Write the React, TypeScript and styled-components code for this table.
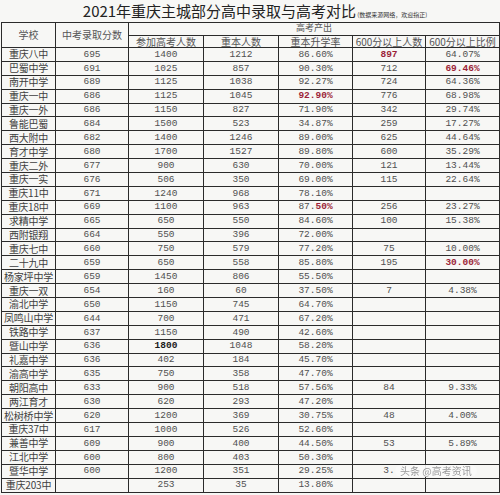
import styled, { createGlobalStyle } from "styled-components";

const GlobalStyle = createGlobalStyle`
  html, body {
    margin: 0;
    padding: 0;
    background: #f7f7f5;
  }
`;

const Page = styled.div`
  width: 500px;
  height: 495px;
  overflow: hidden;
  background: #f7f7f5;
  color: #4a4a4a;
`;

const TitleBar = styled.div`
  height: 22px;
  display: flex;
  justify-content: center;
  align-items: flex-end;
  padding-left: 10px;
  box-sizing: border-box;
`;

const Title = styled.h1`
  margin: 0 0 2px;
  font-family: "Noto Sans CJK SC", sans-serif;
  font-size: 15px;
  font-weight: 400;
  line-height: 18px;
  color: #222;
`;

const Source = styled.span`
  margin: 0 0 4px 1px;
  font-family: "Noto Sans CJK SC", sans-serif;
  font-size: 6px;
  line-height: 7px;
  color: #333;
`;

const Table = styled.table`
  margin-left: 1px;
  width: 498px;
  border-collapse: collapse;
  table-layout: fixed;
`;

const HeadRow = styled.tr<{ $h: number }>`
  height: ${(p) => p.$h}px;
`;

const HeadCell = styled.th<{ $small?: boolean }>`
  padding: 0;
  border: 1px solid #2b2b2b;
  font-family: "Noto Sans CJK SC", sans-serif;
  font-size: ${(p) => (p.$small ? 9 : 10)}px;
  font-weight: 400;
  line-height: 1;
  color: #555;
  text-align: center;
  white-space: nowrap;
  vertical-align: ${(p) => (p.$small ? "top" : "middle")};
`;

const Row = styled.tr`
  height: 13.9px;
`;

const NameCell = styled.td`
  padding: 0;
  border: 1px solid #2b2b2b;
  font-family: "Noto Sans CJK SC", sans-serif;
  font-size: 10px;
  line-height: 1;
  color: #3f3f3f;
  text-align: center;
  white-space: nowrap;
  overflow: hidden;
  letter-spacing: -0.2px;
`;

const Cell = styled.td<{ $tone?: "red" | "bold" }>`
  position: relative;
  padding: 0;
  border: 1px solid #2b2b2b;
  font-family: "Liberation Mono", "Noto Sans CJK SC", monospace;
  font-size: 9.5px;
  line-height: 1;
  text-align: center;
  white-space: nowrap;
  color: ${(p) => (p.$tone === "red" ? "#9c1f38" : p.$tone === "bold" ? "#1a1a1a" : "#505050")};
  font-weight: ${(p) => (p.$tone ? 700 : 400)};
`;

const RedPart = styled.span`
  color: #9c1f38;
  font-weight: 700;
`;

const Watermark = styled.span`
  position: absolute;
  left: 42px;
  top: 0;
  padding: 0 5px;
  border-radius: 7px;
  background: rgba(250, 250, 250, 0.9);
  font-family: "Noto Sans CJK SC", sans-serif;
  font-size: 10px;
  line-height: 12px;
  font-weight: 400;
  color: #9a9a9a;
  filter: blur(0.4px);
  white-space: nowrap;
`;

type Tone = "red" | "bold" | undefined;
type School = {
  name: string;
  score: string;
  exam: string;
  top: string;
  rate: string;
  over: string;
  ratio: string;
  tones?: Partial<Record<"exam" | "rate" | "over" | "ratio", Tone>>;
};

const rows: School[] = [
  { name: "重庆八中", score: "695", exam: "1400", top: "1212", rate: "86.60%", over: "897", ratio: "64.07%", tones: { over: "red" } },
  { name: "巴蜀中学", score: "691", exam: "1025", top: "857", rate: "90.30%", over: "712", ratio: "69.46%", tones: { ratio: "red" } },
  { name: "南开中学", score: "689", exam: "1125", top: "1038", rate: "92.27%", over: "724", ratio: "64.36%" },
  { name: "重庆一中", score: "686", exam: "1125", top: "1045", rate: "92.90%", over: "776", ratio: "68.98%", tones: { rate: "red" } },
  { name: "重庆一外", score: "686", exam: "1150", top: "827", rate: "71.90%", over: "342", ratio: "29.74%" },
  { name: "鲁能巴蜀", score: "684", exam: "1500", top: "523", rate: "34.87%", over: "259", ratio: "17.27%" },
  { name: "西大附中", score: "682", exam: "1400", top: "1246", rate: "89.00%", over: "625", ratio: "44.64%" },
  { name: "育才中学", score: "680", exam: "1700", top: "1527", rate: "89.80%", over: "600", ratio: "35.29%" },
  { name: "重庆二外", score: "677", exam: "900", top: "630", rate: "70.00%", over: "121", ratio: "13.44%" },
  { name: "重庆一实", score: "676", exam: "506", top: "350", rate: "69.00%", over: "115", ratio: "22.64%" },
  { name: "重庆11中", score: "671", exam: "1240", top: "968", rate: "78.10%", over: "", ratio: "" },
  { name: "重庆18中", score: "669", exam: "1100", top: "963", rate: "87.50%", over: "256", ratio: "23.27%" },
  { name: "求精中学", score: "665", exam: "650", top: "550", rate: "84.60%", over: "100", ratio: "15.38%" },
  { name: "西附银翔", score: "664", exam: "550", top: "396", rate: "72.00%", over: "", ratio: "" },
  { name: "重庆七中", score: "660", exam: "750", top: "579", rate: "77.20%", over: "75", ratio: "10.00%" },
  { name: "二十九中", score: "659", exam: "650", top: "558", rate: "85.80%", over: "195", ratio: "30.00%", tones: { ratio: "red" } },
  { name: "杨家坪中学", score: "659", exam: "1450", top: "806", rate: "55.50%", over: "", ratio: "" },
  { name: "重庆一双", score: "654", exam: "160", top: "60", rate: "37.50%", over: "7", ratio: "4.38%" },
  { name: "渝北中学", score: "650", exam: "1150", top: "745", rate: "64.70%", over: "", ratio: "" },
  { name: "凤鸣山中学", score: "644", exam: "700", top: "471", rate: "67.20%", over: "", ratio: "" },
  { name: "铁路中学", score: "637", exam: "1150", top: "490", rate: "42.60%", over: "", ratio: "" },
  { name: "暨山中学", score: "636", exam: "1800", top: "1048", rate: "58.20%", over: "", ratio: "", tones: { exam: "bold" } },
  { name: "礼嘉中学", score: "636", exam: "402", top: "184", rate: "45.70%", over: "", ratio: "" },
  { name: "渝高中学", score: "635", exam: "750", top: "358", rate: "47.70%", over: "", ratio: "" },
  { name: "朝阳高中", score: "633", exam: "900", top: "518", rate: "57.56%", over: "84", ratio: "9.33%" },
  { name: "两江育才", score: "630", exam: "620", top: "293", rate: "47.20%", over: "", ratio: "" },
  { name: "松树桥中学", score: "620", exam: "1200", top: "369", rate: "30.75%", over: "48", ratio: "4.00%" },
  { name: "重庆37中", score: "617", exam: "1000", top: "526", rate: "52.60%", over: "", ratio: "" },
  { name: "兼善中学", score: "609", exam: "900", top: "400", rate: "44.50%", over: "53", ratio: "5.89%" },
  { name: "江北中学", score: "600", exam: "800", top: "403", rate: "50.30%", over: "", ratio: "" },
  { name: "暨华中学", score: "600", exam: "1200", top: "351", rate: "29.25%", over: "3.", ratio: "" },
  { name: "重庆203中", score: "", exam: "253", top: "35", rate: "13.80%", over: "", ratio: "" },
];

export default function App() {
  return (
    <Page>
      <GlobalStyle />
      <TitleBar>
        <Title>2021年重庆主城部分高中录取与高考对比</Title>
        <Source>(数据来源网络，欢迎指正)</Source>
      </TitleBar>

      <Table>
        <colgroup>
          <col style={{ width: 54 }} />
          <col style={{ width: 73 }} />
          <col style={{ width: 75 }} />
          <col style={{ width: 75 }} />
          <col style={{ width: 74 }} />
          <col style={{ width: 73 }} />
          <col style={{ width: 74 }} />
        </colgroup>
        <thead>
          <HeadRow $h={13}>
            <HeadCell rowSpan={2}>学校</HeadCell>
            <HeadCell rowSpan={2}>中考录取分数</HeadCell>
            <HeadCell colSpan={5} $small>
              高考产出
            </HeadCell>
          </HeadRow>
          <HeadRow $h={12}>
            <HeadCell>参加高考人数</HeadCell>
            <HeadCell>重本人数</HeadCell>
            <HeadCell>重本升学率</HeadCell>
            <HeadCell>600分以上人数</HeadCell>
            <HeadCell>600分以上比例</HeadCell>
          </HeadRow>
        </thead>
        <tbody>
          {rows.map((r) => (
            <Row key={r.name}>
              <NameCell>{r.name}</NameCell>
              <Cell>{r.score}</Cell>
              <Cell $tone={r.tones?.exam}>{r.exam}</Cell>
              <Cell>{r.top}</Cell>
              {r.name === "重庆18中" ? (
                <Cell>
                  87.<RedPart>50%</RedPart>
                </Cell>
              ) : (
                <Cell $tone={r.tones?.rate}>{r.rate}</Cell>
              )}
              <Cell $tone={r.tones?.over}>
                {r.over}
                {r.name === "暨华中学" && <Watermark>头条 @高考资讯</Watermark>}
              </Cell>
              <Cell $tone={r.tones?.ratio}>{r.ratio}</Cell>
            </Row>
          ))}
        </tbody>
      </Table>
    </Page>
  );
}
